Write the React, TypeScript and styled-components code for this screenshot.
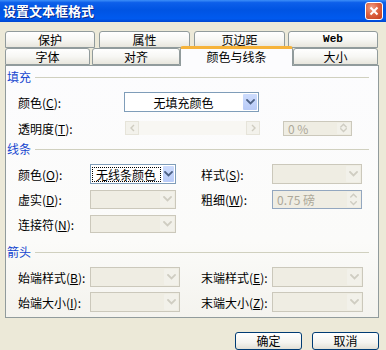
import React from 'react';
import styled, { createGlobalStyle } from 'styled-components';

const GlobalStyle = createGlobalStyle`
  html, body {
    margin: 0;
    padding: 0;
  }
  body {
    background: #ece9d8;
    font-family: "Noto Sans CJK SC", "Noto Sans", sans-serif;
    font-size: 12px;
    color: #000;
    overflow: hidden;
  }
`;

const Window = styled.div`
  width: 386px;
  height: 350px;
  display: flex;
  flex-direction: column;
  background: #ece9d8;
  overflow: hidden;
`;

const TitleBar = styled.div`
  height: 22px;
  flex: none;
  display: flex;
  align-items: center;
  justify-content: space-between;
  padding: 0 3px;
  background: linear-gradient(
    to bottom,
    #3d8ff8 0%,
    #0d5fea 12%,
    #0054e3 45%,
    #005aef 85%,
    #0046cf 100%
  );
`;

const Title = styled.span`
  color: #fff;
  font-weight: 700;
  font-size: 13px;
  line-height: 22px;
  text-shadow: 1px 1px 0 #0b2a8c;
`;

const CloseButton = styled.div`
  width: 18px;
  height: 18px;
  box-sizing: border-box;
  border: 1px solid #fff;
  border-radius: 3px;
  background: radial-gradient(circle at 35% 30%, #f0a088 0%, #dd6342 45%, #c23c1c 100%);
  display: flex;
  align-items: center;
  justify-content: center;
`;

const TabStrip = styled.div`
  width: 374px;
  margin: 9px 0 0 5px;
  display: flex;
  flex-direction: column;
`;

const TabRow = styled.div`
  height: 17px;
  display: flex;
  align-items: flex-end;
`;

const Tab = styled.div<{ $w: number; $gap?: number; $active?: boolean; $mono?: boolean }>`
  position: relative;
  width: ${p => p.$w}px;
  margin-left: ${p => p.$gap || 0}px;
  height: ${p => (p.$active ? 20 : 17)}px;
  margin-bottom: ${p => (p.$active ? -1 : 0)}px;
  z-index: ${p => (p.$active ? 2 : 1)};
  box-sizing: border-box;
  border: 1px solid #919b9c;
  border-bottom: ${p => (p.$active ? 'none' : '1px solid #919b9c')};
  border-top: ${p => (p.$active ? '3px solid #f6b33a' : '1px solid #919b9c')};
  border-radius: 3px 3px 0 0;
  background: ${p =>
    p.$active ? '#fcfcfe' : 'linear-gradient(to bottom, #ffffff 0%, #f7f7f4 50%, #e8e6dd 100%)'};
  display: flex;
  align-items: center;
  justify-content: center;
  font-family: ${p => (p.$mono ? '"Liberation Mono", monospace' : 'inherit')};
  font-weight: ${p => (p.$mono ? 700 : 400)};
  font-size: ${p => (p.$mono ? 11 : 12)}px;
  line-height: 1;
  padding-bottom: ${p => (p.$active ? 2 : 0)}px;
`;

const Panel = styled.div`
  width: 374px;
  height: 253px;
  box-sizing: border-box;
  border: 1px solid #919b9c;
  background: linear-gradient(to bottom, #fcfcfe 0%, #fbfbf9 70%, #f4f3ee 100%);
  display: flex;
  flex-direction: column;
`;

const Legend = styled.div<{ $top: number }>`
  height: 14px;
  margin-top: ${p => p.$top}px;
  padding: 0 9px 0 1px;
  display: flex;
  align-items: center;
  gap: 4px;
  color: #1546cf;
  line-height: 14px;

  &::after {
    content: '';
    flex: 1;
    height: 1px;
    background: #d0d0bf;
  }
`;

const Row = styled.div<{ $top: number; $h: number }>`
  height: ${p => p.$h}px;
  margin-top: ${p => p.$top}px;
  padding-left: 12px;
  display: flex;
  align-items: stretch;
`;

const Label = styled.label<{ $w: number; $ml?: number }>`
  width: ${p => p.$w}px;
  margin-left: ${p => p.$ml || 0}px;
  flex: none;
  display: flex;
  align-items: center;
  white-space: nowrap;
  color: #000;

  u {
    text-decoration: underline;
  }
`;

const Select = styled.div<{ $w: number; $disabled?: boolean }>`
  width: ${p => p.$w}px;
  flex: none;
  box-sizing: border-box;
  border: 1px solid ${p => (p.$disabled ? '#cbc8bb' : '#7f9db9')};
  background: ${p => (p.$disabled ? '#efede3' : '#fff')};
  display: flex;
  align-items: stretch;
`;

const SelectText = styled.div<{ $center?: boolean }>`
  flex: 1;
  min-width: 0;
  display: flex;
  align-items: center;
  justify-content: ${p => (p.$center ? 'center' : 'flex-start')};
  padding-left: ${p => (p.$center ? 0 : 2)}px;
  white-space: nowrap;
`;

const FocusText = styled.span`
  outline: 1px dotted #000;
  outline-offset: 0;
  padding: 0 4px 0 3px;
  line-height: 13px;
`;

const DropButton = styled.div<{ $w: number; $disabled?: boolean }>`
  width: ${p => p.$w}px;
  flex: none;
  margin: 1px;
  border-radius: 1px;
  background: ${p =>
    p.$disabled ? '#f2f1ea' : 'linear-gradient(to bottom, #cddcfd 0%, #b9cbf7 100%)'};
  display: flex;
  align-items: center;
  justify-content: center;
`;

const Slider = styled.div`
  width: 135px;
  height: 14px;
  align-self: center;
  flex: none;
  display: flex;
`;

const SliderArrow = styled.div`
  width: 14px;
  box-sizing: border-box;
  border: 1px solid #e6e4da;
  background: #f3f2ec;
  display: flex;
  align-items: center;
  justify-content: center;
`;

const SliderTrack = styled.div`
  flex: 1;
  background: #f8f7f3;
`;

const Spin = styled.div<{ $w: number; $h: number; $ml?: number; $blue?: boolean }>`
  width: ${p => p.$w}px;
  height: ${p => p.$h}px;
  margin-left: ${p => p.$ml || 0}px;
  align-self: center;
  flex: none;
  box-sizing: border-box;
  border: 1px solid ${p => (p.$blue ? '#93a7bf' : '#cbc8bb')};
  background: #efede3;
  display: flex;
  align-items: stretch;
`;

const SpinText = styled.div`
  flex: 1;
  display: flex;
  align-items: center;
  padding-left: 4px;
  color: #aca899;
  white-space: nowrap;
`;

const SpinButtons = styled.div`
  width: 13px;
  margin: 1px;
  display: flex;
  flex-direction: column;
  background: #f2f1ea;
`;

const SpinHalf = styled.div`
  flex: 1;
  display: flex;
  align-items: center;
  justify-content: center;
`;

const Footer = styled.div`
  margin-top: 14px;
  padding-right: 7px;
  display: flex;
  justify-content: flex-end;
  gap: 10px;
`;

const PushButton = styled.button`
  width: 67px;
  height: 18px;
  padding: 0;
  box-sizing: border-box;
  border: 1px solid #003c74;
  border-radius: 3px;
  background: linear-gradient(to bottom, #ffffff 0%, #f5f4ef 60%, #e3e0d6 100%);
  font-family: inherit;
  font-size: 12px;
  color: #000;
  line-height: 1;
`;

const Chevron: React.FC<{ color: string; up?: boolean; size?: number }> = ({ color, up, size = 9 }) => (
  <svg width={size} height={size * 0.67} viewBox="0 0 9 6">
    <path
      d={up ? 'M1 5 L4.5 1.5 L8 5' : 'M1 1 L4.5 4.5 L8 1'}
      stroke={color}
      strokeWidth="1.8"
      fill="none"
      strokeLinecap="square"
    />
  </svg>
);

const SideArrow: React.FC<{ right?: boolean }> = ({ right }) => (
  <svg width="5" height="8" viewBox="0 0 5 8">
    <path
      d={right ? 'M1 1 L4 4 L1 7' : 'M4 1 L1 4 L4 7'}
      stroke="#cfccc0"
      strokeWidth="1.4"
      fill="none"
    />
  </svg>
);

const Drop: React.FC<{ w: number; disabled?: boolean }> = ({ w, disabled }) => (
  <DropButton $w={w} $disabled={disabled}>
    <Chevron color={disabled ? '#cfcdc2' : '#4d6185'} />
  </DropButton>
);

const SpinControl: React.FC = () => (
  <SpinButtons>
    <SpinHalf>
      <Chevron color="#cfcdc2" up size={7} />
    </SpinHalf>
    <SpinHalf>
      <Chevron color="#cfcdc2" size={7} />
    </SpinHalf>
  </SpinButtons>
);

export default function App() {
  return (
    <>
      <GlobalStyle />
      <Window>
        <TitleBar>
          <Title>设置文本框格式</Title>
          <CloseButton>
            <svg width="10" height="10" viewBox="0 0 10 10">
              <path d="M1.5 1.5 L8.5 8.5 M8.5 1.5 L1.5 8.5" stroke="#fff" strokeWidth="2" />
            </svg>
          </CloseButton>
        </TitleBar>

        <TabStrip>
          <TabRow>
            <Tab $w={90}>保护</Tab>
            <Tab $w={91} $gap={4}>属性</Tab>
            <Tab $w={91} $gap={4}>页边距</Tab>
            <Tab $w={90} $gap={3} $mono>Web</Tab>
          </TabRow>
          <TabRow>
            <Tab $w={85}>字体</Tab>
            <Tab $w={88} $gap={2}>对齐</Tab>
            <Tab $w={113} $active>颜色与线条</Tab>
            <Tab $w={85}>大小</Tab>
          </TabRow>

          <Panel>
            <Legend $top={4}>填充</Legend>
            <Row $top={8} $h={20}>
              <Label $w={106}>
                颜色(<u>C</u>):
              </Label>
              <Select $w={135}>
                <SelectText $center>无填充颜色</SelectText>
                <Drop w={14} />
              </Select>
            </Row>
            <Row $top={8} $h={16}>
              <Label $w={107}>
                透明度(<u>T</u>):
              </Label>
              <Slider>
                <SliderArrow>
                  <SideArrow />
                </SliderArrow>
                <SliderTrack />
                <SliderArrow>
                  <SideArrow right />
                </SliderArrow>
              </Slider>
              <Spin $w={69} $h={15} $ml={23}>
                <SpinText>0 %</SpinText>
                <SpinControl />
              </Spin>
            </Row>

            <Legend $top={6}>线条</Legend>
            <Row $top={8} $h={20}>
              <Label $w={72}>
                颜色(<u>O</u>):
              </Label>
              <Select $w={86}>
                <SelectText>
                  <FocusText>无线条颜色</FocusText>
                </SelectText>
                <Drop w={11} />
              </Select>
              <Label $w={71} $ml={25}>
                样式(<u>S</u>):
              </Label>
              <Select $w={90} $disabled>
                <SelectText />
                <Drop w={14} disabled />
              </Select>
            </Row>
            <Row $top={6} $h={19}>
              <Label $w={72}>
                虚实(<u>D</u>):
              </Label>
              <Select $w={86} $disabled>
                <SelectText />
                <Drop w={14} disabled />
              </Select>
              <Label $w={71} $ml={25}>
                粗细(<u>W</u>):
              </Label>
              <Spin $w={90} $h={19} $blue>
                <SpinText>0.75 磅</SpinText>
                <SpinControl />
              </Spin>
            </Row>
            <Row $top={6} $h={18}>
              <Label $w={72}>
                连接符(<u>N</u>):
              </Label>
              <Select $w={86} $disabled>
                <SelectText />
                <Drop w={14} disabled />
              </Select>
            </Row>

            <Legend $top={12}>箭头</Legend>
            <Row $top={8} $h={20}>
              <Label $w={72}>
                始端样式(<u>B</u>):
              </Label>
              <Select $w={90} $disabled>
                <SelectText />
                <Drop w={14} disabled />
              </Select>
              <Label $w={71} $ml={21}>
                末端样式(<u>E</u>):
              </Label>
              <Select $w={91} $disabled>
                <SelectText />
                <Drop w={14} disabled />
              </Select>
            </Row>
            <Row $top={5} $h={20}>
              <Label $w={72}>
                始端大小(<u>I</u>):
              </Label>
              <Select $w={90} $disabled>
                <SelectText />
                <Drop w={14} disabled />
              </Select>
              <Label $w={71} $ml={21}>
                末端大小(<u>Z</u>):
              </Label>
              <Select $w={91} $disabled>
                <SelectText />
                <Drop w={14} disabled />
              </Select>
            </Row>
          </Panel>
        </TabStrip>

        <Footer>
          <PushButton>确定</PushButton>
          <PushButton>取消</PushButton>
        </Footer>
      </Window>
    </>
  );
}
